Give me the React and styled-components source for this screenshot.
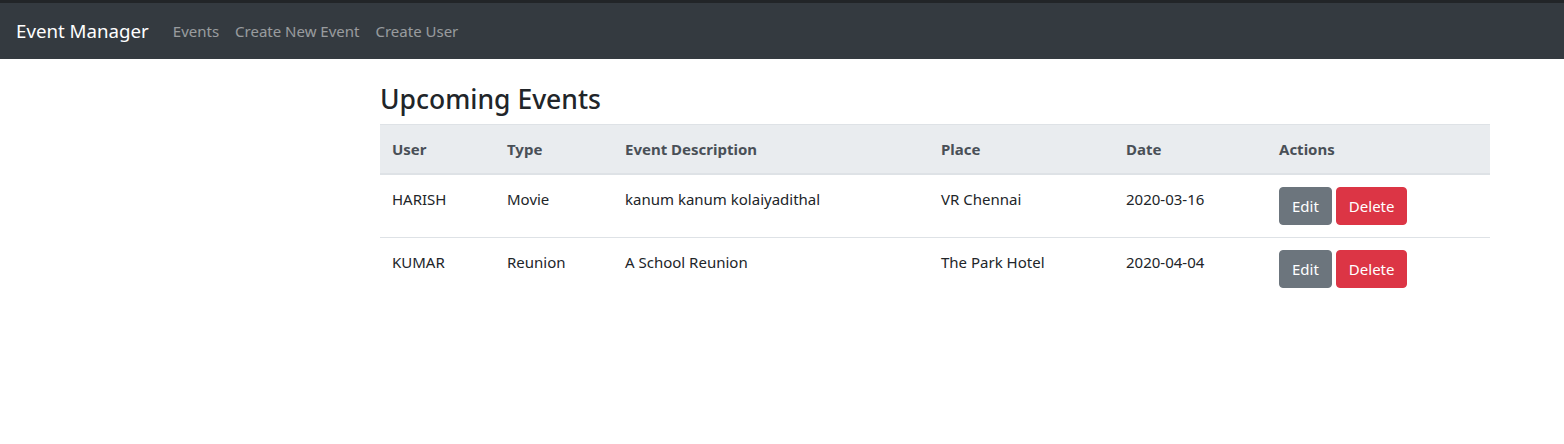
import React from 'react';
import styled, { createGlobalStyle } from 'styled-components';

const GlobalStyle = createGlobalStyle`
  body {
    margin: 0;
    font-family: "Noto Sans", "Liberation Sans", sans-serif;
    font-size: 15px;
    line-height: 24px;
    color: #212529;
    background: #fff;
  }
`;

const Navbar = styled.nav`
  display: flex;
  align-items: center;
  height: 56px;
  padding: 0 16px;
  background: #343a40;
  border-top: 3px solid #222528;
`;

const Brand = styled.a`
  font-size: 18.7px;
  color: #fff;
  margin-right: 16px;
  text-decoration: none;
`;

const NavLink = styled.a`
  padding: 8px;
  color: rgba(255, 255, 255, 0.5);
  text-decoration: none;
`;

const Container = styled.div`
  width: 1110px;
  margin: 25px 0 0 380px;
`;

const Heading = styled.h3`
  font-size: 26.5px;
  font-weight: 500;
  line-height: 1.2;
  margin: 0 0 8px;
`;

const Table = styled.table`
  width: 100%;
  border-collapse: collapse;
  table-layout: fixed;
`;

const Th = styled.th`
  box-sizing: border-box;
  text-align: left;
  padding: 12px;
  background: #e9ecef;
  color: #495057;
  font-weight: 700;
  border-top: 1px solid #dee2e6;
  border-bottom: 2px solid #dee2e6;
  width: ${p => p.$w};
`;

const Td = styled.td`
  padding: 12px;
  vertical-align: top;
  border-top: 1px solid #dee2e6;
  white-space: nowrap;
`;

const Row = styled.tr`
  &:first-child td {
    border-top: none;
  }
`;

const Button = styled.button`
  font: inherit;
  font-size: 15px;
  color: #fff;
  background: ${p => (p.$danger ? '#dc3545' : '#6c757d')};
  border: 1px solid ${p => (p.$danger ? '#dc3545' : '#6c757d')};
  border-radius: 4px;
  padding: 6px 12px;
  line-height: 24px;
  margin-right: 4px;
  cursor: pointer;
`;

const events = [
  { user: 'HARISH', type: 'Movie', desc: 'kanum kanum kolaiyadithal', place: 'VR Chennai', date: '2020-03-16' },
  { user: 'KUMAR', type: 'Reunion', desc: 'A School Reunion', place: 'The Park Hotel', date: '2020-04-04' },
];

export default function App() {
  return (
    <>
      <GlobalStyle />
      <Navbar>
        <Brand href="#">Event Manager</Brand>
        <NavLink href="#">Events</NavLink>
        <NavLink href="#">Create New Event</NavLink>
        <NavLink href="#">Create User</NavLink>
      </Navbar>
      <Container>
        <Heading>Upcoming Events</Heading>
        <Table>
          <thead>
            <tr>
              <Th $w="115px">User</Th>
              <Th $w="118px">Type</Th>
              <Th $w="316px">Event Description</Th>
              <Th $w="185px">Place</Th>
              <Th $w="153px">Date</Th>
              <Th $w="223px">Actions</Th>
            </tr>
          </thead>
          <tbody>
            {events.map(e => (
              <Row key={e.user}>
                <Td>{e.user}</Td>
                <Td>{e.type}</Td>
                <Td>{e.desc}</Td>
                <Td>{e.place}</Td>
                <Td>{e.date}</Td>
                <Td>
                  <Button>Edit</Button>
                  <Button $danger>Delete</Button>
                </Td>
              </Row>
            ))}
          </tbody>
        </Table>
      </Container>
    </>
  );
}
